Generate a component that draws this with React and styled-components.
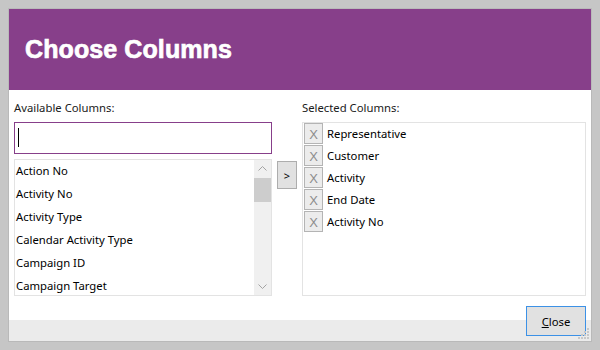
import React from "react";
import styled, { createGlobalStyle } from "styled-components";

const available = [
  "Action No",
  "Activity No",
  "Activity Type",
  "Calendar Activity Type",
  "Campaign ID",
  "Campaign Target",
];

const selected = ["Representative", "Customer", "Activity", "End Date", "Activity No"];

const GlobalStyle = createGlobalStyle`
  *, *::before, *::after {
    box-sizing: border-box;
  }
  html, body {
    margin: 0;
    padding: 0;
    background: #c6c6c6;
  }
  body {
    font-family: "Noto Sans", "Open Sans", sans-serif;
    font-size: 11.3px;
    color: #000;
  }
`;

const Page = styled.div`
  width: 600px;
  height: 350px;
  padding: 8px 0 0 8px;
`;

const Window = styled.div`
  position: relative;
  width: 584px;
  height: 334px;
  border: 1px solid #b9b9b9;
  background: #fff;
  display: flex;
  flex-direction: column;
`;

const Header = styled.div`
  height: 81px;
  flex: none;
  background: #873f8a;
  display: flex;
  align-items: center;
  padding-left: 16px;
`;

const Title = styled.h1`
  margin: 0;
  font-family: "Liberation Sans", Arial, sans-serif;
  font-size: 25px;
  font-weight: 700;
  color: #fff;
  -webkit-text-stroke: 0.7px #fff;
  letter-spacing: 0.1px;
`;

const Body = styled.div`
  display: flex;
  gap: 5px;
  padding: 10px 5px 0 5px;
  height: 206px;
  flex: none;
`;

const Column = styled.div`
  display: flex;
  flex-direction: column;
  width: ${(p) => p.$width}px;
`;

const Label = styled.div`
  height: 16px;
  line-height: 16px;
  margin-bottom: 6px;
  color: #1a1a1a;
`;

const SearchBox = styled.div`
  height: 32px;
  border: 1px solid #873f8a;
  display: flex;
  align-items: center;
  padding-left: 3px;
  margin-bottom: 5px;
`;

const Caret = styled.span`
  width: 1px;
  height: 19px;
  margin-top: -2px;
  background: #000;
`;

const ListBox = styled.div`
  flex: 1;
  display: flex;
  border: 1px solid #e3e3e3;
  overflow: hidden;
`;

const Items = styled.div`
  flex: 1;
  padding-left: 1px;
`;

const Item = styled.div`
  height: 23px;
  line-height: 21px;
  white-space: nowrap;
`;

const ScrollBar = styled.div`
  width: 17px;
  background: #f0f0f0;
  display: flex;
  flex-direction: column;
  align-items: center;
`;

const ScrollArrow = styled.div`
  height: 17px;
  width: 17px;
  display: flex;
  align-items: center;
  justify-content: center;
`;

const Thumb = styled.div`
  width: 17px;
  height: 24px;
  background: #cdcdcd;
  margin-top: 1px;
`;

const Track = styled.div`
  flex: 1;
`;

const Middle = styled.div`
  padding-top: 61px;
`;

const MoveButton = styled.button`
  width: 20px;
  height: 28px;
  padding: 0;
  border: 1px solid #adadad;
  background: #e1e1e1;
  font-family: "Noto Sans", sans-serif;
  font-size: 11px;
  color: #000;
`;

const SelectedList = styled.div`
  flex: 1;
  border: 1px solid #e3e3e3;
  padding: 0 0 0 1px;
  display: flex;
  flex-direction: column;
  gap: 1px;
`;

const SelectedRow = styled.div`
  display: flex;
  align-items: center;
  gap: 4px;
  height: 21px;
  line-height: 19px;
`;

const RemoveButton = styled.span`
  width: 19px;
  height: 21px;
  border: 1px solid #b4b4b4;
  background: #ececec;
  color: #8c8c8c;
  font-family: "Liberation Sans", sans-serif;
  font-size: 13px;
  font-weight: 300;
  display: flex;
  align-items: center;
  justify-content: center;
  padding-top: 2px;
`;

const ButtonRow = styled.div`
  flex: 1;
  display: flex;
  justify-content: flex-end;
  align-items: flex-start;
  padding: 10px 5px 0 0;
  background: linear-gradient(to bottom, #fff 24px, #ebebeb 24px);
`;

const CloseButton = styled.button`
  width: 60px;
  height: 30px;
  border: 1px solid #3c91e6;
  background: #e1e1e1;
  font-family: "Noto Sans", sans-serif;
  font-size: 11.3px;
  color: #000;
  padding: 0;

  u {
    text-decoration: underline;
  }
`;

const Grip = styled.svg`
  position: absolute;
  right: 1px;
  bottom: 1px;
`;

const Chevron = ({ up }) => (
  <svg width="9" height="5" viewBox="0 0 9 5">
    <path
      d={up ? "M0.5 4.5 L4.5 0.5 L8.5 4.5" : "M0.5 0.5 L4.5 4.5 L8.5 0.5"}
      fill="none"
      stroke="#a3a3a3"
      strokeWidth="1"
    />
  </svg>
);

export default function App() {
  const dots = [
    [9, 0],
    [9, 3],
    [6, 3],
    [9, 6],
    [6, 6],
    [3, 6],
    [9, 9],
    [6, 9],
    [3, 9],
    [0, 9],
  ];
  return (
    <>
      <GlobalStyle />
      <Page>
        <Window>
          <Header>
            <Title>Choose Columns</Title>
          </Header>
          <Body>
            <Column $width={258}>
              <Label>Available Columns:</Label>
              <SearchBox>
                <Caret />
              </SearchBox>
              <ListBox>
                <Items>
                  {available.map((name) => (
                    <Item key={name}>{name}</Item>
                  ))}
                </Items>
                <ScrollBar>
                  <ScrollArrow>
                    <Chevron up />
                  </ScrollArrow>
                  <Thumb />
                  <Track />
                  <ScrollArrow>
                    <Chevron />
                  </ScrollArrow>
                </ScrollBar>
              </ListBox>
            </Column>
            <Middle>
              <MoveButton>&gt;</MoveButton>
            </Middle>
            <Column $width={284}>
              <Label>Selected Columns:</Label>
              <SelectedList>
                {selected.map((name) => (
                  <SelectedRow key={name}>
                    <RemoveButton>X</RemoveButton>
                    <span>{name}</span>
                  </SelectedRow>
                ))}
              </SelectedList>
            </Column>
          </Body>
          <ButtonRow>
            <CloseButton>
              <u>C</u>lose
            </CloseButton>
          </ButtonRow>
          <Grip width="12" height="12" viewBox="0 0 12 12">
            {dots.map(([x, y]) => (
              <rect key={`${x}-${y}`} x={x} y={y} width="2" height="2" fill="#c8c8c8" />
            ))}
          </Grip>
        </Window>
      </Page>
    </>
  );
}
